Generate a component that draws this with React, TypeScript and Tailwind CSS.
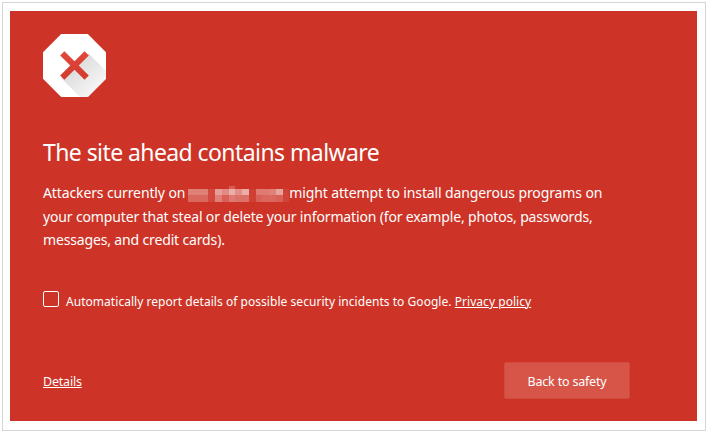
import React from 'react';

// opacity of every cell in the redacted host name
const redactedRows = [
  [0, 0, 0, 0, 0, 0, 0.2, 0, 0, 0, 0, 0, 0, 0, 0],
  [0.38, 0.38, 0.38, 0.1, 0.52, 0.42, 0.6, 0.45, 0.6, 0.06, 0.35, 0.35, 0.38, 0.55, 0.08],
  [0.25, 0.25, 0.25, 0.1, 0.38, 0.22, 0.35, 0.3, 0.3, 0.06, 0.22, 0.25, 0.26, 0.22, 0.08],
];

const Redacted: React.FC = () => (
  <span className="grid grid-cols-15 grid-rows-[3px_6px_7px] w-[101px] h-4 mt-[3px] ml-[3px]" aria-hidden="true">
    {redactedRows.flat().map((opacity, i) => (
      <span key={i} className="bg-white" style={{ opacity }} />
    ))}
  </span>
);

const WarningIcon: React.FC = () => (
  <svg className="w-[63px] h-[63px] shrink-0" viewBox="0 0 63 63">
    <defs>
      <linearGradient id="shadow" x1="28" y1="28" x2="53" y2="53" gradientUnits="userSpaceOnUse">
        <stop offset="0" stopColor="#d8d8d8" />
        <stop offset="1" stopColor="#f4f4f4" />
      </linearGradient>
      <linearGradient id="cross" x1="0" y1="17" x2="0" y2="46" gradientUnits="userSpaceOnUse">
        <stop offset="0" stopColor="#e2493d" />
        <stop offset="1" stopColor="#d33a2d" />
      </linearGradient>
    </defs>
    <path d="M18.2 0H44.8L63 18.2V44.8L44.8 63H18.2L0 44.8V18.2Z" fill="#fff" />
    <path d="M45.7 19.5L63 37V44.8L44.8 63H37L18 44Z" fill="url(#shadow)" />
    <path d="M19.3 19.3L43.7 43.7M43.7 19.3L19.3 43.7" stroke="url(#cross)" strokeWidth="6" />
  </svg>
);

export default function App() {
  return (
    <div className="w-[708px] h-[433px] bg-white pt-[2px] pl-[2px] font-['Noto_Sans',sans-serif] text-white">
      <div className="w-[704px] h-[429px] border border-[#d5d5d5] pt-2 pl-[7px]">
        <main className="flex flex-col w-[687px] h-[410px] bg-[#cd3427] pl-[33px] pt-[23px]">
          <WarningIcon />

          <h1 className="mt-[39px] text-[23px] leading-8 tracking-[-0.58px] whitespace-nowrap">
            The site ahead contains malware
          </h1>

          <div className="mt-[13px] text-[14px] leading-[23.5px] tracking-[-0.15px] whitespace-nowrap">
            <p className="flex items-center h-[23.5px] tracking-[-0.12px]">
              <span>Attackers currently on</span>
              <Redacted />
              <span>might attempt to install dangerous programs on</span>
            </p>
            <p>your computer that steal or delete your information (for example, photos, passwords,</p>
            <p>messages, and credit cards).</p>
          </div>

          <label className="flex items-center mt-[40.5px] h-5 text-[12px] tracking-[0.04px] whitespace-nowrap">
            <span className="w-4 h-4 mb-1.5 mr-[7px] border border-white rounded-[2px]" />
            <span>
              Automatically report details of possible security incidents to Google.{' '}
              <a href="#" className="underline">Privacy policy</a>
            </span>
          </label>

          <div className="flex items-center justify-between w-[587px] h-[37px] mt-[50px] text-[12.5px] tracking-[-0.19px]">
            <a href="#" className="pt-[3px] underline">Details</a>
            <button className="w-[126px] h-[37px] pt-[3px] rounded-[2px] border border-[#d34a3d] bg-[#d65548]">
              Back to safety
            </button>
          </div>
        </main>
      </div>
    </div>
  );
}
